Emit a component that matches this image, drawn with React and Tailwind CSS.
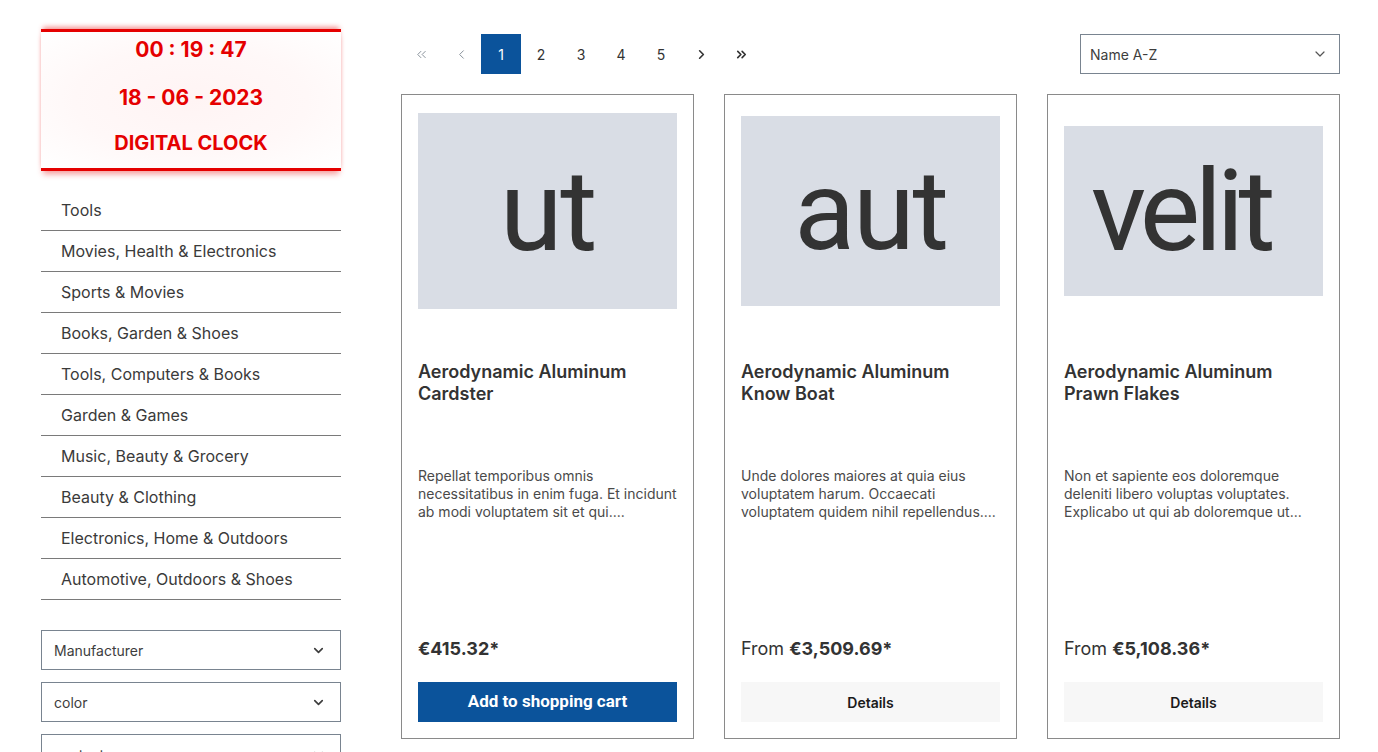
import React from 'react'
import { ChevronDown, ChevronLeft, ChevronRight, ChevronsLeft, ChevronsRight } from 'lucide-react'

const categories = [
    'Tools',
    'Movies, Health & Electronics',
    'Sports & Movies',
    'Books, Garden & Shoes',
    'Tools, Computers & Books',
    'Garden & Games',
    'Music, Beauty & Grocery',
    'Beauty & Clothing',
    'Electronics, Home & Outdoors',
    'Automotive, Outdoors & Shoes',
]

const products = [
    {
        word: 'ut',
        imgClass: 'h-[196px] text-[114px] tracking-[-0.02em]',
        title: 'Aerodynamic Aluminum Cardster',
        desc: 'Repellat temporibus omnis necessitatibus in enim fuga. Et incidunt ab modi voluptatem sit et qui....',
        from: false,
        price: '€415.32*',
    },
    {
        word: 'aut',
        imgClass: 'h-[190px] text-[112px] tracking-[-0.02em]',
        title: 'Aerodynamic Aluminum Know Boat',
        desc: 'Unde dolores maiores at quia eius voluptatem harum. Occaecati voluptatem quidem nihil repellendus....',
        from: true,
        price: '€3,509.69*',
    },
    {
        word: 'velit',
        imgClass: 'h-[170px] text-[114px] tracking-[-0.05em] pr-[26px]',
        title: 'Aerodynamic Aluminum Prawn Flakes',
        desc: 'Non et sapiente eos doloremque deleniti libero voluptas voluptates. Explicabo ut qui ab doloremque ut...',
        from: true,
        price: '€5,108.36*',
    },
]

const Clock = () => (
    <div className="w-[300px] h-[142px] border-t-[3px] border-b-[3px] border-[#e50000] shadow-[0_-4px_5px_-2px_rgba(230,0,0,0.45),0_5px_6px_-2px_rgba(230,0,0,0.4)] flex flex-col items-center text-[#e50000] font-bold text-[21px] leading-none [background:radial-gradient(ellipse_at_center,#fff4f4_0%,#fff8f8_55%,#fff_100%)]">
        <div className="mt-[7px]">00 : 19 : 47</div>
        <div className="mt-[27px]">18 - 06 - 2023</div>
        <div className="mt-[25px] text-[20px]">DIGITAL CLOCK</div>
    </div>
)

const FilterSelect = ({ label }) => (
    <div className="w-[300px] h-[40px] border border-[#798490] flex items-center justify-between pl-[12px] pr-[14px] text-[14px] text-[#3d3d3d]">
        <span>{label}</span>
        <ChevronDown size={15} strokeWidth={2.6} className="text-[#3d3d3d]" />
    </div>
)

const PageBtn = ({ children, active, muted }) => (
    <div
        className={
            'w-[40px] h-[40px] flex items-center justify-center text-[14px] ' +
            (active ? 'bg-[#0b539b] text-white' : muted ? 'text-[#8a939c]' : 'text-[#333]')
        }
    >
        {children}
    </div>
)

const Card = ({ p }) => (
    <div className="border border-[#8a8a8a] p-[16px] flex flex-col h-[645px]">
        <div className="h-[200px] flex items-center">
            <div className={'w-full bg-[#d9dde5] flex items-center justify-center text-[#333] leading-none [font-family:Roboto,sans-serif] ' + p.imgClass}>
                <span className="-mt-[1px]">{p.word}</span>
            </div>
        </div>
        <h3 className="mt-[50px] text-[18px] font-semibold leading-[22px] text-[#333] h-[66px] pr-4">{p.title}</h3>
        <p className="mt-[40px] text-[14px] leading-[18px] text-[#4a4a4a]">{p.desc}</p>
        <div className="mt-auto">
            <div className="text-[18px] text-[#333]">
                {p.from && <span className="font-normal">From </span>}
                <span className="font-bold">{p.price}</span>
            </div>
            {p.from ? (
                <div className="mt-[20px] h-[40px] bg-[#f7f7f7] flex items-center justify-center text-[14px] font-semibold text-[#1a1a1a]">
                    Details
                </div>
            ) : (
                <div className="mt-[20px] h-[40px] bg-[#0b539b] flex items-center justify-center text-[17px] font-bold text-white [font-family:Roboto,sans-serif]">
                    Add to shopping cart
                </div>
            )}
        </div>
    </div>
)

const App = () => {
    return (
        <main className="min-h-screen bg-white [font-family:Inter,'Noto_Sans',sans-serif] text-[#333]">
            <div className="flex pl-[41px] pr-[38px] pt-[29px] gap-[60px]">
                <aside className="w-[300px] shrink-0">
                    <Clock />
                    <ul className="mt-[19px]">
                        {categories.map((c, i) => (
                            <li
                                key={i}
                                className="h-[41px] border-b border-[#7a7a7a] flex items-center pl-[20px] text-[16px] text-[#3a3a3a]"
                            >
                                {c}
                            </li>
                        ))}
                    </ul>
                    <div className="mt-[30px] flex flex-col gap-[12px]">
                        <FilterSelect label="Manufacturer" />
                        <FilterSelect label="color" />
                        <FilterSelect label="content" />
                    </div>
                </aside>

                <section className="flex-1">
                    <div className="flex items-center justify-between mt-[5px]">
                        <div className="flex">
                            <PageBtn muted><ChevronsLeft size={15} strokeWidth={1.6} /></PageBtn>
                            <PageBtn muted><ChevronLeft size={15} strokeWidth={1.6} /></PageBtn>
                            <PageBtn active>1</PageBtn>
                            <PageBtn>2</PageBtn>
                            <PageBtn>3</PageBtn>
                            <PageBtn>4</PageBtn>
                            <PageBtn>5</PageBtn>
                            <PageBtn><ChevronRight size={15} strokeWidth={2.6} /></PageBtn>
                            <PageBtn><ChevronsRight size={15} strokeWidth={2.6} /></PageBtn>
                        </div>
                        <div className="w-[260px] h-[40px] border border-[#798490] flex items-center justify-between pl-[9px] pr-[11px] text-[14px] text-[#3d3d3d]">
                            <span>Name A-Z</span>
                            <ChevronDown size={16} strokeWidth={1.8} className="text-[#555]" />
                        </div>
                    </div>

                    <div className="grid grid-cols-3 gap-[30px] mt-[20px]">
                        {products.map((p, i) => (
                            <Card key={i} p={p} />
                        ))}
                    </div>
                </section>
            </div>
        </main>
    )
}

export default App
